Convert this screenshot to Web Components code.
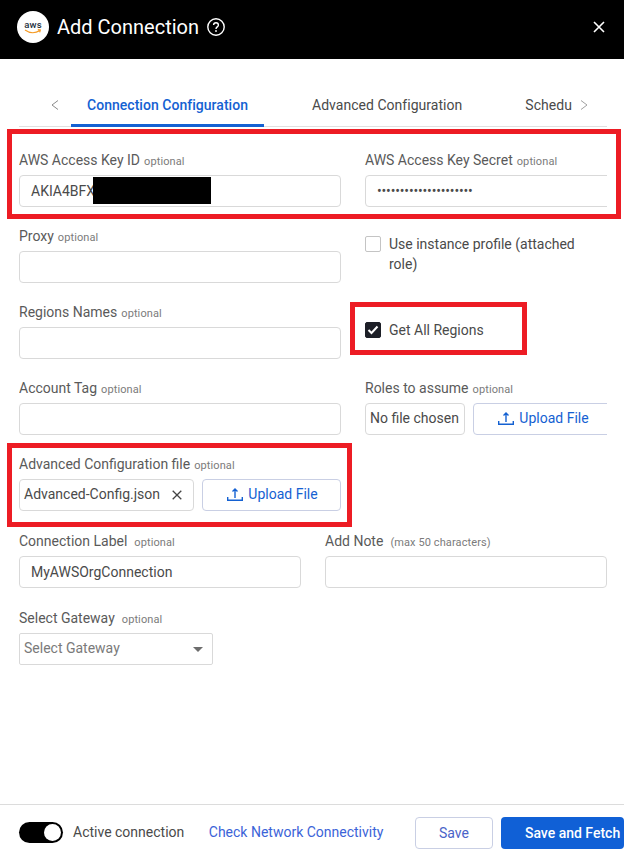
<!DOCTYPE html>
<html lang="en"><head><meta charset="utf-8"><title>Add Connection</title>
<style>
html,body{margin:0;padding:0;background:#fff}
body{font-family:Roboto,"Liberation Sans",sans-serif;color:#4a4a4a;width:624px;height:859px;overflow:hidden}
</style></head><body>
<x-app></x-app>
<template id="t-app"><style>
:host{display:flex;flex-direction:column;width:624px;height:859px;position:relative;overflow:hidden}
main{flex:1;position:relative;min-height:0}
.form{width:588px;margin-left:19px;overflow:hidden;padding-top:24px;display:flex;flex-direction:column;gap:20px}
.grid{display:grid;grid-template-columns:322px 322px;column-gap:24px}
.grid2{display:grid;grid-template-columns:282px 282px;column-gap:24px;margin-top:1px}
.sel{margin-top:1px}
x-check.a{padding-top:7px}
x-check.b{padding-top:17px}
.pair{display:flex;gap:8px}
x-mark{position:absolute}
.redact{position:absolute;left:93px;top:118px;width:118px;height:27px;background:#000}
</style>
<x-header></x-header>
<main>
<x-tabs></x-tabs>
<div class="form">
<div class="grid">
<x-field label="AWS Access Key ID" hint="optional"><x-box pad="12">AKIA4BFX</x-box></x-field>
<x-field label="AWS Access Key Secret" hint="optional"><x-box pad="12"><span style="letter-spacing:-.17px;font-size:14px">•••••••••••••••••••••</span></x-box></x-field>
</div>
<div class="grid">
<x-field label="Proxy" hint="optional"><x-box></x-box></x-field>
<x-check class="a">Use instance profile (attached role)</x-check>
</div>
<div class="grid">
<x-field label="Regions Names" hint="optional"><x-box></x-box></x-field>
<x-check class="b" checked>Get All Regions</x-check>
</div>
<div class="grid">
<x-field label="Account Tag" hint="optional"><x-box></x-box></x-field>
<x-field label="Roles to assume" hint="optional"><div class="pair"><x-box pad="5" style="width:100px;flex:none;padding-bottom:3px">No file chosen</x-box><x-upload style="width:139px;flex:none"></x-upload></div></x-field>
</div>
<div class="grid">
<x-field label="Advanced Configuration file" hint="optional"><div class="pair"><x-box pad="5" style="width:175px;flex:none;padding-bottom:3px">Advanced-Config.json<svg slot="end" width="10" height="10" viewBox="0 0 10 10" fill="none" stroke="#444" stroke-width="1.3" style="margin-right:11px;margin-top:2px"><path d="M.7.7l8.6 8.6M9.3.7L.7 9.3"/></svg></x-box><x-upload style="width:139px;flex:none"></x-upload></div></x-field>
</div>
<div class="grid2">
<x-field label="Connection Label" hint="optional" wide><x-box pad="12">MyAWSOrgConnection</x-box></x-field>
<x-field label="Add Note" hint="(max 50 characters)" wide><x-box></x-box></x-field>
</div>
<div class="sel" style="width:194px"><x-field label="Select Gateway" hint="optional" wide><x-select>Select Gateway</x-select></x-field></div>
</div>
<div class="redact"></div>
<x-mark style="left:7px;top:70px;width:604px;height:80px"></x-mark>
<x-mark style="left:350px;top:243px;width:167px;height:43px"></x-mark>
<x-mark style="left:7px;top:384px;width:335px;height:74px"></x-mark>
</main>
<x-footer></x-footer>
</template>

<template id="t-header"><style>
:host{display:flex;align-items:center;height:59px;background:#000;color:#fff;flex:none;padding:0 17px 5px;box-sizing:border-box}
.logo{width:32px;height:32px;border-radius:50%;background:#fff;display:flex;flex-direction:column;align-items:center;justify-content:center;margin-right:8px;color:#232f3e}
.logo b{font:500 9.5px/8px Roboto,sans-serif;letter-spacing:.1px}
.logo svg{display:block;margin-top:0}
h1{font:400 20px/28px Roboto,sans-serif;margin:0 8px 0 0}
</style>
<div class="logo"><b>aws</b><svg width="18" height="5" viewBox="0 0 18 5" fill="none" stroke="#f59a23" stroke-width="1.1"><path d="M1 1c4.500 3.200 10.500 3.200 15 .6M13.800 .6l2.600 .4-.7 2.300"/></svg></div>
<h1>Add Connection</h1>
<svg width="18" height="18" viewBox="0 0 18 18" fill="none" stroke="#fff"><circle cx="9" cy="9" r="8.200" stroke-width="1.4"/><path d="M6.600 7.100c0-1.400 1-2.300 2.400-2.300s2.400.9 2.400 2.200c0 1.900-2.400 1.900-2.400 3.900" stroke-width="1.4"/><circle cx="9" cy="13" r=".9" fill="#fff" stroke="none"/></svg>
<svg width="12" height="12" viewBox="0 0 12 12" fill="none" stroke="#fff" stroke-width="1.600" style="margin-left:auto;margin-right:2px"><path d="M1 1l10 10M11 1L1 11"/></svg>
</template>

<template id="t-tabs"><style>
:host{display:flex;align-items:stretch;height:68px;margin:0 17px 0 19px;border-bottom:1px solid #e0e0e0;box-sizing:border-box;position:relative;font:400 14px/20px Roboto,sans-serif;color:#4a4a4a;letter-spacing:.03px}
.ch{flex:none;align-self:flex-end;margin-bottom:16px}
.t{align-self:stretch;display:flex;align-items:flex-end;padding-bottom:11px;box-sizing:border-box;white-space:nowrap}
.on{color:#1461d2;font-weight:500;border-bottom:3px solid #1461d2;margin-bottom:-1px;padding:0 16px 9px;width:193px;box-sizing:border-box;margin-left:12px}
.adv{margin-left:48px}
.sch{margin-left:63px;width:41px}
</style>
<svg class="ch" style="margin-left:32px" width="8" height="10" viewBox="0 0 8 10" fill="none" stroke="#8a8a8a"><path d="M7 .5L1 5l6 4.500"/></svg>
<div class="t on">Connection Configuration</div>
<div class="t adv">Advanced Configuration</div>
<div class="t sch">Schedu</div>
<svg class="ch" style="margin-left:14px" width="8" height="10" viewBox="0 0 8 10" fill="none" stroke="#a0a0a0"><path d="M1 .5L7 5 1 9.500"/></svg>
</template>

<template id="t-field"><style>
:host{display:block}
.l{height:24px;font:400 14px/19px Roboto,sans-serif;color:#5a5a5a;white-space:nowrap}
small{font-size:11px;color:#7b7b7b;margin-left:4px;letter-spacing:.1px}
:host([wide]) small{margin-left:7px}
</style>
<div class="l"><span id="n"></span><small id="h"></small></div><slot></slot>
</template>

<template id="t-box"><style>
:host{display:flex;align-items:center;justify-content:space-between;height:32px;box-sizing:border-box;border:1px solid #d9d9d9;border-radius:4px;font:400 14px/20px Roboto,sans-serif;color:#4a4a4a;white-space:nowrap;overflow:hidden;background:#fff;padding-bottom:1px}
</style><span id="c"><slot></slot></span><slot name="end"></slot>
</template>

<template id="t-select"><style>
:host{display:flex;align-items:center;justify-content:space-between;height:32px;box-sizing:border-box;border:1px solid #d9d9d9;border-radius:2px;padding:0 9px 3px 4px;font:400 14px/20px Roboto,sans-serif;color:#7a7a7a}
i{width:0;height:0;border:5px solid transparent;border-top:5px solid #6d6d6d;border-bottom:0;display:block;margin-top:4px}
</style><slot></slot><i></i>
</template>

<template id="t-upload"><style>
:host{display:flex;align-items:center;justify-content:center;gap:5px;height:32px;box-sizing:border-box;border:1px solid #c9cfe4;border-radius:4px;color:#1461d2;font:400 14px/20px Roboto,sans-serif;white-space:nowrap;padding:0 0 3px 2px}
svg{margin-top:1px}
</style><svg width="16" height="16" viewBox="0 0 16 16" fill="none" stroke="#1461d2" stroke-width="1.4"><path d="M.7 11v3.300h14.600V11M8 12V3M5.500 5.500L8 3l2.500 2.500"/></svg><span>Upload File</span>
</template>

<template id="t-check"><style>
:host{display:flex;gap:8px;font:400 14px/20px Roboto,sans-serif;color:#4a4a4a;align-items:flex-start}
.b{flex:none;width:16px;height:16px;box-sizing:border-box;border:1px solid #c4c4c4;border-radius:2px;margin-top:2px;background:#fff;display:flex;align-items:center;justify-content:center}
:host([checked]) .b{background:#1d1f27;border-color:#1d1f27}
svg{display:none}
:host([checked]) svg{display:block}
.s{max-width:200px}
</style><div class="b"><svg width="12" height="10" viewBox="0 0 12 10" fill="none" stroke="#fff" stroke-width="2"><path d="M1.500 5l3 3 6-6.500"/></svg></div><div class="s"><slot></slot></div>
</template>

<template id="t-mark"><style>
:host{display:block;border:5px solid #ed1c24;box-sizing:content-box;pointer-events:none}
</style></template>

<template id="t-footer"><style>
:host{position:absolute;left:0;right:0;top:804px;height:55px;border-top:1px solid #dcdcdc;box-sizing:border-box;display:flex;align-items:flex-start;padding:12px 0 0 19px;font:400 14px/20px Roboto,sans-serif;color:#4a4a4a;overflow:hidden}
.tg{width:44px;height:21px;border-radius:11px;background:#000;position:relative;flex:none;margin:5px 10px 0 0}
.tg i{position:absolute;right:2px;top:2px;width:17px;height:17px;background:#fff;border-radius:50%}
.txt{margin-top:5px;white-space:nowrap}
.link{margin-left:24.500px;color:#3b63d8}
.btn{flex:none;height:32px;box-sizing:border-box;display:flex;align-items:center;border-radius:4px;white-space:nowrap}
.save{width:78px;justify-content:center;border:1px solid #c9cfe4;color:#4a63c8;margin-left:31.500px}
.go{width:123px;background:#1060d6;color:#fff;font-weight:500;padding-left:24px;margin-left:8px}
</style>
<div class="tg"><i></i></div><div class="txt">Active connection</div><div class="txt link">Check Network Connectivity</div>
<div class="btn save">Save</div><div class="btn go">Save and Fetch</div>
</template>

<script>
function reg(name,tid,init){customElements.define(name,class extends HTMLElement{
 constructor(){super();const r=this.attachShadow({mode:'open'});r.appendChild(document.getElementById(tid).content.cloneNode(true));}
 connectedCallback(){if(init)init(this,this.shadowRoot);}
});}
reg('x-header','t-header');reg('x-tabs','t-tabs');
reg('x-field','t-field',(h,r)=>{r.getElementById('n').textContent=h.getAttribute('label');r.getElementById('h').textContent=h.getAttribute('hint')||'';});
reg('x-box','t-box',(h,r)=>{const p=h.getAttribute('pad');if(p)h.style.paddingLeft=(p-1)+'px';});
reg('x-select','t-select');reg('x-upload','t-upload');reg('x-check','t-check');reg('x-mark','t-mark');reg('x-footer','t-footer');
reg('x-app','t-app');
</script>
</body></html>
